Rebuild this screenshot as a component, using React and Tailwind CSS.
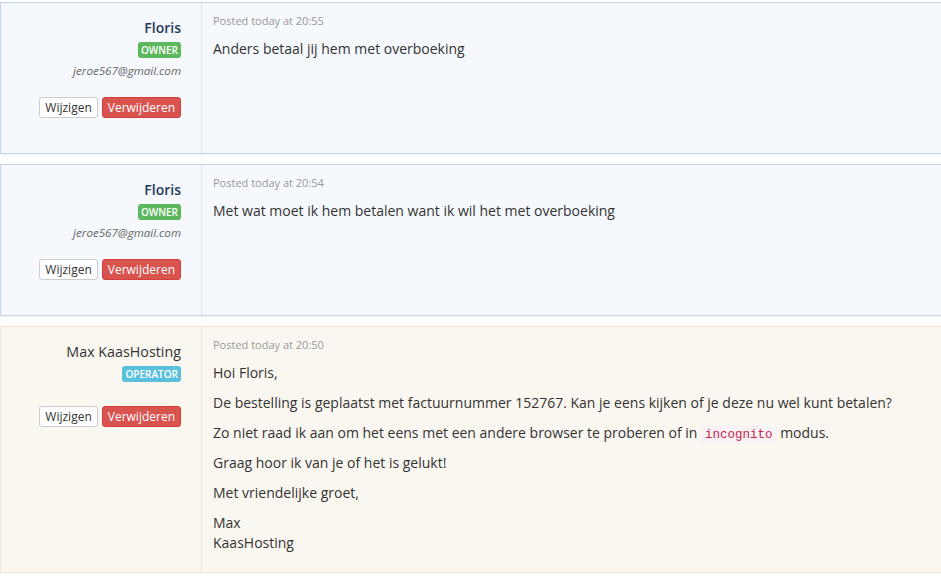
import React from 'react';

// Ticket reply thread: each reply card has author info on the left and the message on the right
const replies = [
  {
    name: 'Floris',
    role: 'OWNER',
    email: 'jeroe567@gmail.com',
    posted: 'Posted today at 20:55',
    staff: false,
    body: [<p key="1">Anders betaal jij hem met overboeking</p>],
  },
  {
    name: 'Floris',
    role: 'OWNER',
    email: 'jeroe567@gmail.com',
    posted: 'Posted today at 20:54',
    staff: false,
    body: [<p key="1">Met wat moet ik hem betalen want ik wil het met overboeking</p>],
  },
  {
    name: 'Max KaasHosting',
    role: 'OPERATOR',
    email: null,
    posted: 'Posted today at 20:50',
    staff: true,
    body: [
      <p key="1" className="mb-[10px]">Hoi Floris,</p>,
      <p key="2" className="mb-[10px]">
        De bestelling is geplaatst met factuurnummer 152767. Kan je eens kijken of je deze nu wel kunt betalen?
      </p>,
      <p key="3" className="mb-[10px]">
        Zo niet raad ik aan om het eens met een andere browser te proberen of in{' '}
        <code className="rounded-[3px] bg-[#f9f2f4] px-[4px] py-[2px] font-['Liberation_Mono',monospace] text-[12.5px] leading-none text-[#c7254e]">
          incognito
        </code>{' '}
        modus.
      </p>,
      <p key="4" className="mb-[10px]">Graag hoor ik van je of het is gelukt!</p>,
      <p key="5" className="mb-[10px]">Met vriendelijke groet,</p>,
      <p key="6" className="mb-[10px]">
        Max
        <br />
        KaasHosting
      </p>,
    ],
  },
];

function ReplyCard({ reply }) {
  const card = reply.staff
    ? 'border-[#efe5d2] bg-[#faf7f0]'
    : 'border-[#c3d6ee] bg-[#f5f8fc]';
  const divider = reply.staff ? 'border-[#ede4d3]' : 'border-[#dce4ef]';

  return (
    <div className={`flex min-h-[152px] border shadow-[0_1px_2px_rgba(0,0,0,0.06)] ${card}`}>
      <div className={`flex w-[201px] shrink-0 flex-col items-end border-r pr-[20px] pt-[15px] ${divider}`}>
        <div
          className={
            reply.staff
              ? 'text-[14.3px] leading-[20px] font-medium text-[#333]'
              : 'text-[14px] leading-[20px] font-semibold text-[#253a5c]'
          }
        >
          {reply.name}
        </div>
        <span
          className={`mt-[4px] rounded-[3px] px-[3px] text-[10px] leading-[16px] font-semibold text-white ${
            reply.staff ? 'bg-[#5bc0de]' : 'bg-[#5cb85c]'
          }`}
        >
          {reply.role}
        </span>
        {reply.email && (
          <div className="mt-[5px] text-[11.6px] leading-[16px] italic text-[#666]">{reply.email}</div>
        )}
        <div className={`${reply.email ? 'mt-[18px]' : 'mt-[24px]'} flex gap-[4px]`}>
          <button className="h-[21px] rounded-[3px] border border-[#ccc] bg-white px-[5px] text-[12px] leading-[19px] text-[#333]">
            Wijzigen
          </button>
          <button className="h-[21px] rounded-[3px] border border-[#d43f3a] bg-[#d9534f] px-[5px] text-[12px] leading-[19px] text-white">
            Verwijderen
          </button>
        </div>
      </div>
      <div className="flex-1 pb-[9px] pl-[11px] pt-[10px] text-[14px] leading-[20px] text-[#333]">
        <div className="mb-[10px] text-[11px] leading-[16px] text-[#999]">{reply.posted}</div>
        {reply.body}
      </div>
    </div>
  );
}

export default function App() {
  return (
    <div className="w-full overflow-hidden bg-white font-['Open_Sans',sans-serif]">
      <div className="flex w-[1100px] flex-col gap-[10px] pt-[2px]">
        {replies.map((r, i) => (
          <ReplyCard key={i} reply={r} />
        ))}
      </div>
    </div>
  );
}
